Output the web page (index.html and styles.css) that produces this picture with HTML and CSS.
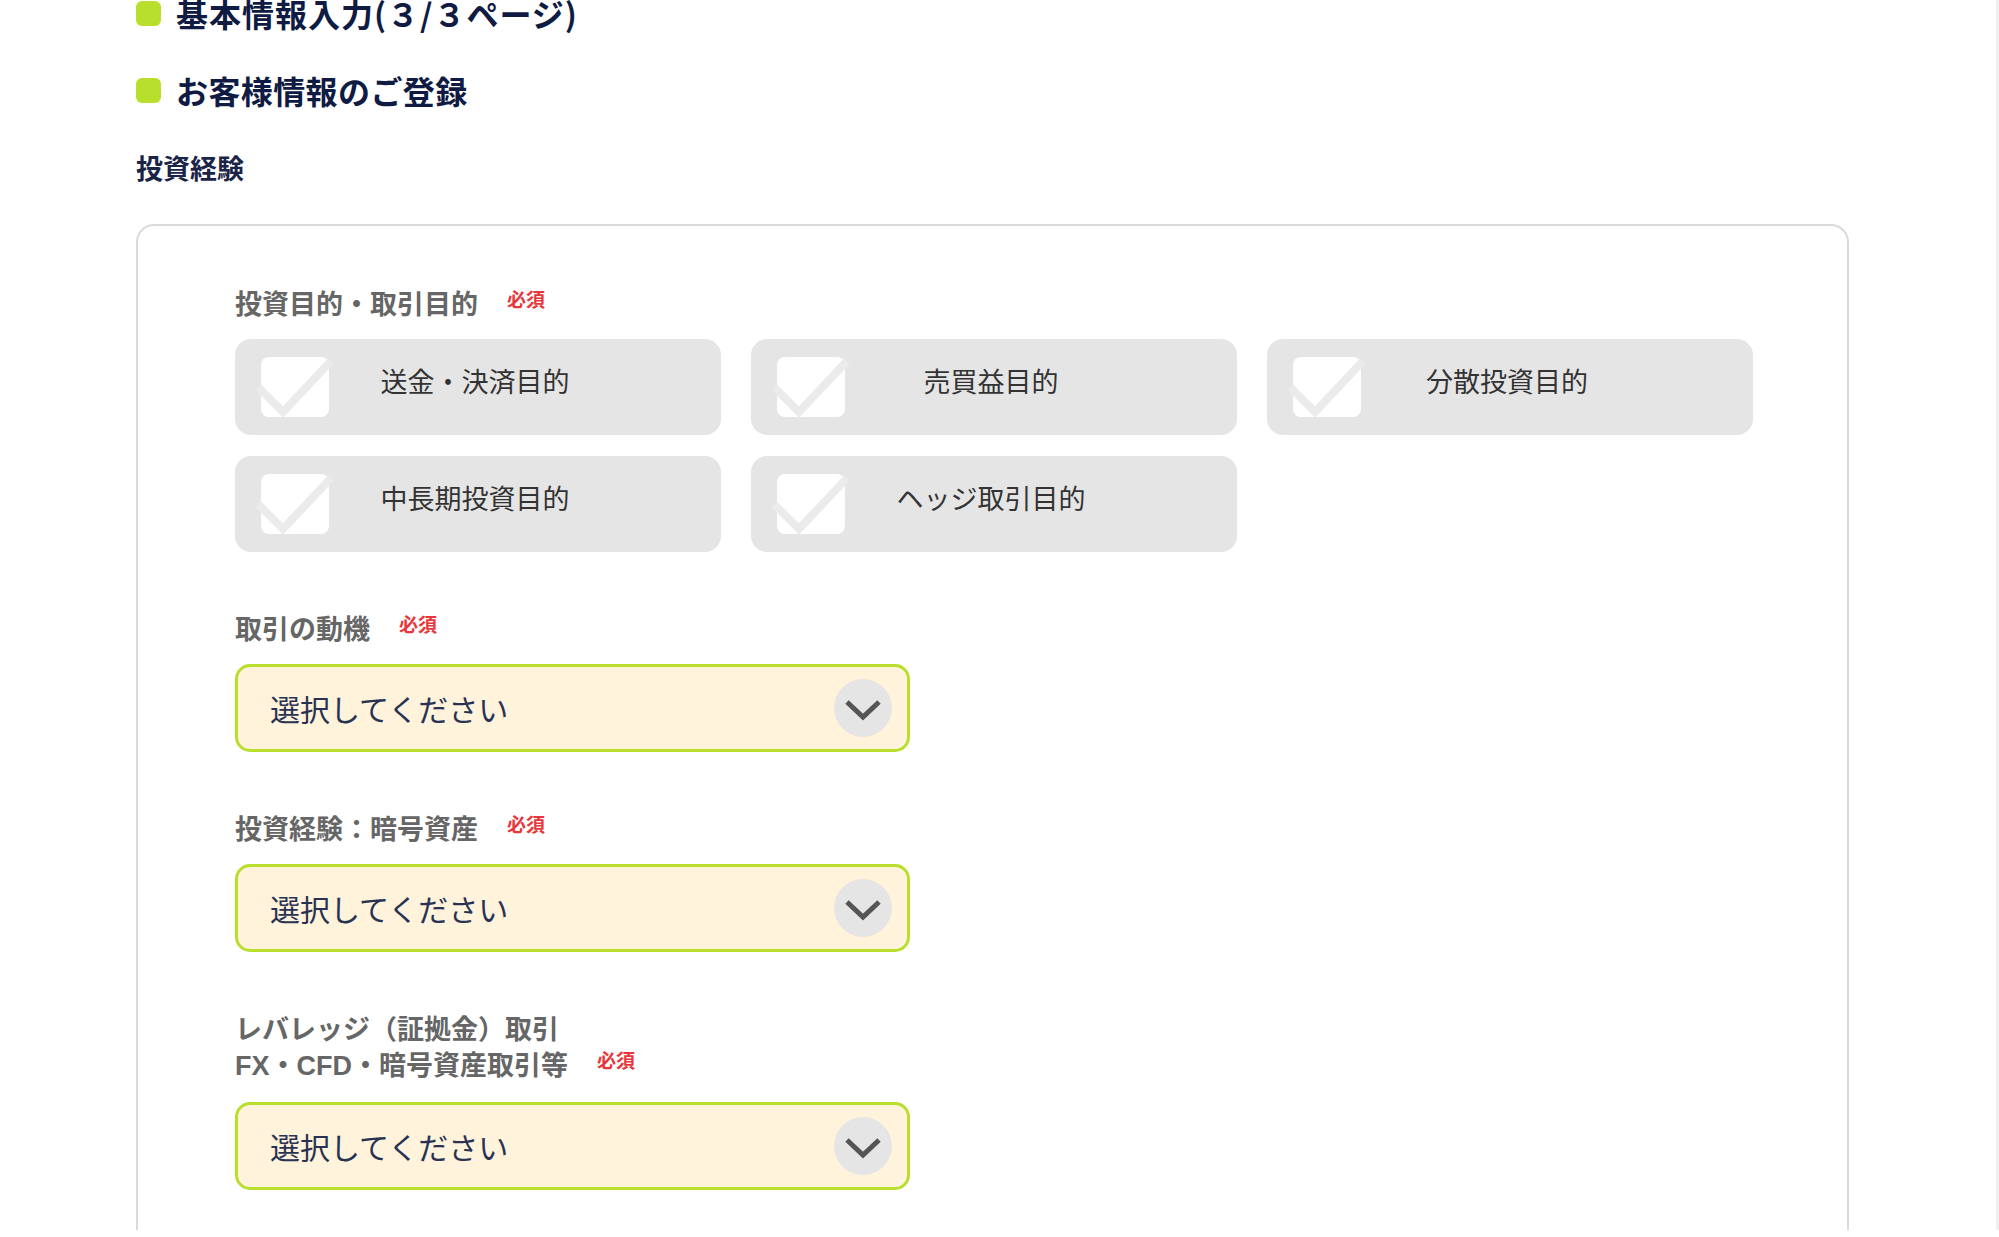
FILE: index.html
```html
<!DOCTYPE html>
<html lang="ja">
<head>
    <meta charset="UTF-8">
    <meta name="viewport" content="width=device-width, initial-scale=1.0">
    <title>お客様情報のご登録</title>
    <link rel="stylesheet" href="styles.css">
</head>
<body>
<div class="page">
    <div class="content">
        <h1 class="title first"><span class="mark"></span>基本情報入力(３/３ページ)</h1>
        <h2 class="title"><span class="mark"></span>お客様情報のご登録</h2>
        <h3 class="section-name">投資経験</h3>

        <div class="card">
            <!-- 投資目的 -->
            <div class="field">
                <p class="field-label">投資目的・取引目的<span class="req">必須</span></p>
                <div class="options">
                    <label class="option"><span class="box"><svg width="80" height="60" viewBox="0 0 80 60"><path d="M1 30 L26 55 L74 4" /></svg></span>送金・決済目的</label>
                    <label class="option"><span class="box"><svg width="80" height="60" viewBox="0 0 80 60"><path d="M1 30 L26 55 L74 4" /></svg></span>売買益目的</label>
                    <label class="option"><span class="box"><svg width="80" height="60" viewBox="0 0 80 60"><path d="M1 30 L26 55 L74 4" /></svg></span>分散投資目的</label>
                    <label class="option"><span class="box"><svg width="80" height="60" viewBox="0 0 80 60"><path d="M1 30 L26 55 L74 4" /></svg></span>中長期投資目的</label>
                    <label class="option"><span class="box"><svg width="80" height="60" viewBox="0 0 80 60"><path d="M1 30 L26 55 L74 4" /></svg></span>ヘッジ取引目的</label>
                </div>
            </div>

            <!-- セレクト -->
            <div class="field">
                <p class="field-label">取引の動機<span class="req">必須</span></p>
                <div class="select">選択してください<span class="arrow"><svg width="38" height="22" viewBox="0 0 38 22"><path d="M3 3 L19 18 L35 3" /></svg></span></div>
            </div>

            <div class="field">
                <p class="field-label">投資経験：暗号資産<span class="req">必須</span></p>
                <div class="select">選択してください<span class="arrow"><svg width="38" height="22" viewBox="0 0 38 22"><path d="M3 3 L19 18 L35 3" /></svg></span></div>
            </div>

            <div class="field">
                <p class="field-label">レバレッジ（証拠金）取引<br><span class="latin">FX</span>・<span class="latin">CFD</span>・暗号資産取引等<span class="req">必須</span></p>
                <div class="select">選択してください<span class="arrow"><svg width="38" height="22" viewBox="0 0 38 22"><path d="M3 3 L19 18 L35 3" /></svg></span></div>
            </div>
        </div>
    </div>
</div>
</body>
</html>
```

FILE: styles.css
```css
html, body {
    margin: 0;
    overflow: hidden;
    background-color: #fff;
}
body {
    font-family: "Noto Sans CJK JP", "Noto Sans", sans-serif;
}
.page {
    height: 100vh;
    border-right: 3px solid #efefef;
}
.content {
    width: 1713px;
    margin-left: 136px;
}
.title {
    display: flex;
    align-items: center;
    gap: 15px;
    margin: 0 0 37px;
    font-size: 32px;
    font-weight: 700;
    line-height: 40px;
    letter-spacing: 0.4px;
    color: #0f1b42;
}
.title.first {
    margin-top: -7px;
    letter-spacing: 1px;
}
.mark {
    width: 25px;
    height: 25px;
    border-radius: 6px;
    background-color: #b7df2c;
    flex-shrink: 0;
}
.section-name {
    margin: 0 0 38px;
    padding-top: 3px;
    font-size: 27px;
    font-weight: 700;
    line-height: 36px;
    color: #1a2446;
}
.card {
    border: 2px solid #dadada;
    border-radius: 18px;
    padding: 59px 0 200px 97px;
}
.field {
    margin-bottom: 58px;
}
.field-label {
    margin: 0 0 18px;
    font-size: 27px;
    font-weight: 700;
    line-height: 36px;
    color: #666;
}
.latin {
    font-family: "Liberation Sans", sans-serif;
}
.req {
    margin-left: 29px;
    font-size: 19px;
    line-height: 19px;
    vertical-align: 7px;
    color: #e8373c;
}
.options {
    display: grid;
    grid-template-columns: repeat(3, 486px);
    gap: 21px 30px;
    margin-top: 1px;
}
.option {
    position: relative;
    height: 96px;
    box-sizing: border-box;
    padding: 0 6px 14px 0;
    border-radius: 16px;
    background-color: #e5e5e5;
    display: flex;
    align-items: center;
    justify-content: center;
    font-size: 27px;
    color: #333;
}
.box {
    position: absolute;
    left: 26px;
    top: 18px;
    width: 68px;
    height: 60px;
    border-radius: 8px;
    background-color: #fff;
}
.box svg {
    position: absolute;
    left: -4px;
    top: 0;
    overflow: visible;
}
.box path {
    fill: none;
    stroke: #ebebeb;
    stroke-width: 8;
}
.select {
    width: 675px;
    height: 88px;
    box-sizing: border-box;
    padding: 0 15px 0 32px;
    border: 3px solid #b7df2c;
    border-radius: 15px;
    background-color: #fff3dc;
    display: flex;
    align-items: center;
    justify-content: space-between;
    font-size: 30px;
    color: #283252;
}
.arrow {
    width: 58px;
    height: 58px;
    border-radius: 50%;
    background-color: #e5e5e5;
    display: flex;
    align-items: center;
    justify-content: center;
    padding-top: 3px;
    box-sizing: border-box;
}
.arrow path {
    fill: none;
    stroke: #555;
    stroke-width: 5;
}
```
